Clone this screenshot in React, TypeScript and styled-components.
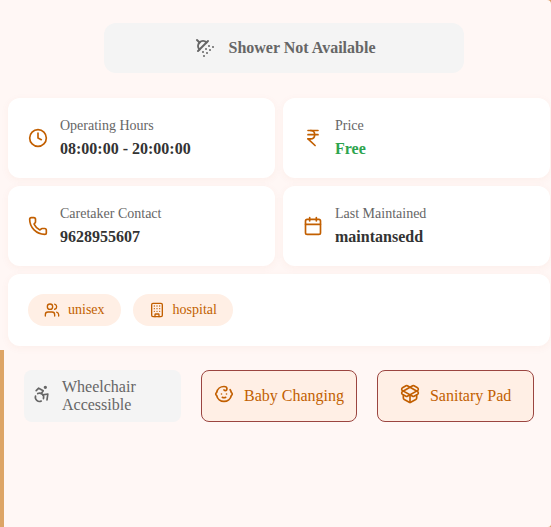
import React from 'react';
import styled, { createGlobalStyle, css } from 'styled-components';
import {
  Accessibility,
  Baby,
  Building,
  Calendar,
  Clock,
  IndianRupee,
  PackageOpen,
  Phone,
  ShowerHead,
  Users,
} from 'lucide-react';

const GlobalStyle = createGlobalStyle`
  * { box-sizing: border-box; }
  body {
    margin: 0;
    background: #dc9a62;
    font-family: "Liberation Serif", serif;
    overflow: hidden;
  }
`;

const Panel = styled.main`
  width: 551px;
  height: 527px;
  padding-top: 23px;
  background: #fff7f5;
  border-radius: 0 4px 3px 0;
  overflow: hidden;
`;

const ShowerStatus = styled.div`
  display: flex;
  align-items: center;
  justify-content: center;
  gap: 12px;
  width: 360px;
  height: 50px;
  margin-left: 104px;
  border-radius: 12px;
  background: #f4f4f4;
  color: #666;
  font-size: 16px;
  font-weight: 700;
`;

const Details = styled.section`
  display: grid;
  grid-template-columns: 267px 267px;
  grid-template-rows: 80px 80px 72px;
  gap: 8px;
  margin: 25px 0 0 8px;
`;

const cardSurface = css`
  display: flex;
  align-items: center;
  padding: 0 20px;
  gap: 12px;
  border-radius: 12px;
  background: #fff;
  box-shadow: 0 2px 8px rgba(192, 86, 33, 0.05);
`;

const InfoCard = styled.article`
  ${cardSurface}
  color: #c25f00;
`;

const TagCard = styled.div`
  ${cardSurface}
  grid-column: 1 / -1;
`;

const Label = styled.div`
  color: #666;
  font-size: 14px;
  line-height: 16px;
  margin-bottom: 6px;
`;

const Value = styled.div<{ $positive?: boolean }>`
  color: ${({ $positive }) => ($positive ? '#2da44e' : '#333')};
  font-size: 16px;
  font-weight: 700;
  line-height: 18px;
`;

const Tag = styled.span`
  display: flex;
  align-items: center;
  gap: 8px;
  height: 32px;
  padding: 0 16px;
  border-radius: 16px;
  background: #ffefe5;
  color: #c25f00;
  font-size: 14px;
`;

const Facilities = styled.section`
  display: grid;
  grid-template-columns: repeat(3, 156.67px);
  column-gap: 20px;
  align-items: start;
  height: 177px;
  margin-top: 4px;
  padding: 20px;
  border-left: 4px solid #dda566;
`;

const Facility = styled.div<{ $available?: boolean }>`
  display: flex;
  align-items: center;
  justify-content: center;
  gap: 10px;
  height: 52px;
  padding: 0 ${({ $available }) => ($available ? 7 : 8)}px;
  border: ${({ $available }) => ($available ? '1px solid #9b4540' : '0')};
  border-radius: 8px;
  background: ${({ $available }) => ($available ? '#ffefe5' : '#f4f4f4')};
  color: ${({ $available }) => ($available ? '#c25f00' : '#666')};
  font-size: 16px;
  line-height: 18px;

  svg {
    flex: none;
    margin-bottom: 4px;
  }
`;

const FacilityName = styled.span<{ $wrap?: boolean }>`
  width: ${({ $wrap }) => ($wrap ? '111px' : 'auto')};
`;

const info = [
  { Icon: Clock, label: 'Operating Hours', value: '08:00:00 - 20:00:00' },
  { Icon: IndianRupee, label: 'Price', value: 'Free', positive: true },
  { Icon: Phone, label: 'Caretaker Contact', value: '9628955607' },
  { Icon: Calendar, label: 'Last Maintained', value: 'maintansedd' },
];

export default function App() {
  return (
    <>
      <GlobalStyle />
      <Panel>
        <ShowerStatus>
          <ShowerHead size={24} />
          <span>Shower Not Available</span>
        </ShowerStatus>
        <Details>
          {info.map(({ Icon, label, value, positive }) => (
            <InfoCard key={label}>
              <Icon size={20} />
              <div>
                <Label>{label}</Label>
                <Value $positive={positive}>{value}</Value>
              </div>
            </InfoCard>
          ))}
          <TagCard>
            <Tag>
              <Users size={16} />
              unisex
            </Tag>
            <Tag>
              <Building size={16} />
              hospital
            </Tag>
          </TagCard>
        </Details>
        <Facilities>
          <Facility>
            <Accessibility size={20} />
            <FacilityName $wrap>Wheelchair Accessible</FacilityName>
          </Facility>
          <Facility $available>
            <Baby size={20} />
            <FacilityName>Baby Changing</FacilityName>
          </Facility>
          <Facility $available>
            <PackageOpen size={20} />
            <FacilityName>Sanitary Pad</FacilityName>
          </Facility>
        </Facilities>
      </Panel>
    </>
  );
}
